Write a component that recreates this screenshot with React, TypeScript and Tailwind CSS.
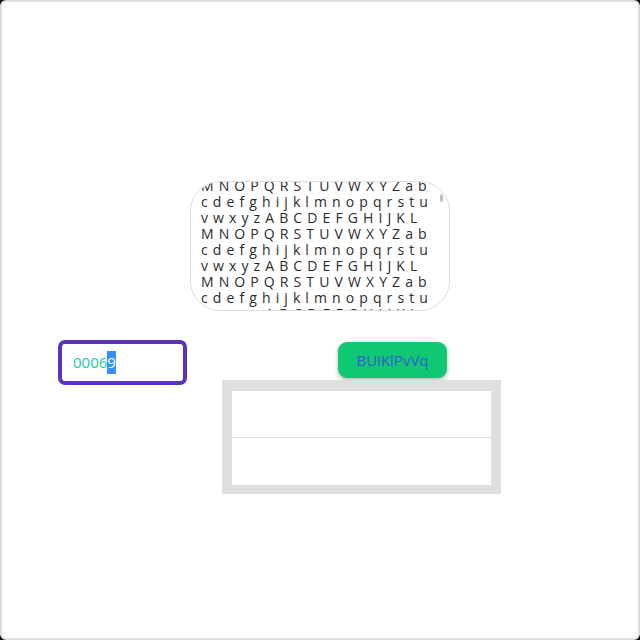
export default function App() {
  const lines = [
    "MNOPQRSTUVWXYZab",
    "cdefghijklmnopqrstu",
    "vwxyzABCDEFGHIJKL",
    "MNOPQRSTUVWXYZab",
    "cdefghijklmnopqrstu",
    "vwxyzABCDEFGHIJKL",
    "MNOPQRSTUVWXYZab",
    "cdefghijklmnopqrstu",
    "vwxyzABCDEFGHIJKL",
  ]

  return (
    <div className="w-[640px] h-[640px] bg-black" style={{ fontFamily: '"Open Sans", sans-serif' }}>
      <div className="h-full border-2 border-[#dedede] rounded-[6px] bg-white">
        {/* scrolling letters box */}
        <div className="relative mx-auto mt-[179px] w-[260px] h-[130px] border border-[#dddddd] rounded-[30px] overflow-hidden">
          <div className="-mt-[4px] pl-[10px] text-[14px] leading-[16px] tracking-[5.1px] text-[#2b2b2b]">
            {lines.map((line, i) => (
              <div key={i} className="whitespace-nowrap">
                {line}
              </div>
            ))}
          </div>
          <div className="absolute right-[6px] top-[12px] w-[3px] h-[8px] rounded-full bg-[#c2c2c2]" />
        </div>

        <div className="flex mt-[29px] ml-[56px]">
          <div className="w-[129px] h-[45px] border-4 border-[#5b33b6] rounded-[7px] flex items-center pl-[11px] text-[15px] text-[#22c9b0]">
            <span>0006</span>
            <span className="bg-[#3390ff] text-white">9</span>
          </div>

          <div className="ml-[35px] flex flex-col">
            <button className="ml-[116px] mt-[2px] w-[109px] h-[36px] rounded-[9px] bg-[#11c872] shadow-[0_2px_4px_rgba(0,0,0,0.3)] text-[15px] text-[#2f5ed0]">
              BUiKlPvVq
            </button>
            <div className="mt-[2px] w-[279px] h-[114px] bg-[#dfdfdf] pt-[11px] px-[10px] pb-[9px]">
              <div className="bg-white h-full flex flex-col">
                <div className="h-[47px] border-b border-[#dddddd]" />
                <div className="flex-1" />
              </div>
            </div>
          </div>
        </div>
      </div>
    </div>
  )
}
